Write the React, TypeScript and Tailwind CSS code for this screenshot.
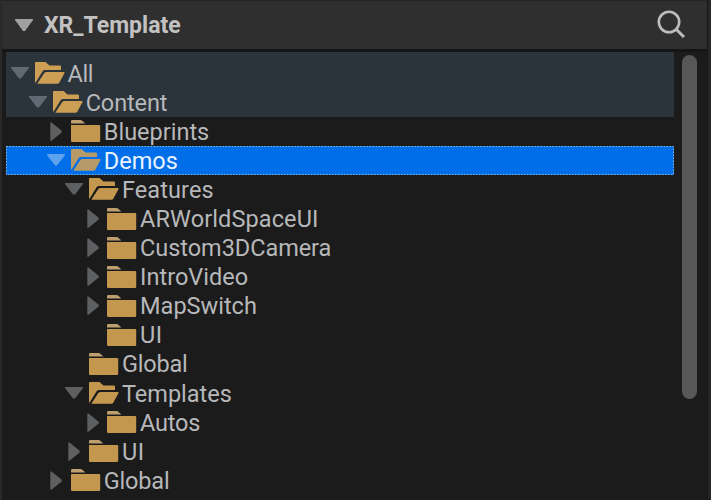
import React from "react";

type State = "open" | "closed" | "leaf";
type Node = { label: string; depth: number; state: State; spacing: string };

const ancestors: Node[] = [
  { label: "All", depth: 0, state: "open", spacing: "tracking-[-0.4px]" },
  { label: "Content", depth: 1, state: "open", spacing: "tracking-[-0.1px]" },
];

const nodes: Node[] = [
  { label: "Blueprints", depth: 2, state: "closed", spacing: "tracking-[0px]" },
  { label: "Demos", depth: 2, state: "open", spacing: "tracking-[0px]" },
  { label: "Features", depth: 3, state: "open", spacing: "tracking-[0.1px]" },
  { label: "ARWorldSpaceUI", depth: 4, state: "closed", spacing: "tracking-[0.1px]" },
  { label: "Custom3DCamera", depth: 4, state: "closed", spacing: "tracking-[-0.05px]" },
  { label: "IntroVideo", depth: 4, state: "closed", spacing: "tracking-[0px]" },
  { label: "MapSwitch", depth: 4, state: "closed", spacing: "tracking-[0px]" },
  { label: "UI", depth: 4, state: "leaf", spacing: "tracking-[0.5px]" },
  { label: "Global", depth: 3, state: "leaf", spacing: "tracking-[-0.2px]" },
  { label: "Templates", depth: 3, state: "open", spacing: "tracking-[0px]" },
  { label: "Autos", depth: 4, state: "closed", spacing: "tracking-[-0.2px]" },
  { label: "UI", depth: 3, state: "closed", spacing: "tracking-[0.5px]" },
  { label: "Global", depth: 2, state: "closed", spacing: "tracking-[-0.2px]" },
];

function Arrow({ state, color }: { state: State; color: string }) {
  return (
    <svg className={`h-[29px] w-[18px] shrink-0 ${color}`} viewBox="0 0 18 29" fill="currentColor">
      {state === "open" && <path d="M0 8h18v1l-8 10.500h-2L0 9z" />}
      {state === "closed" && <path d="M3.300 5.500h1.200l10.200 8.200v1.800L4.500 23.700H3.300z" />}
    </svg>
  );
}

function Folder({ open, color }: { open: boolean; color: string }) {
  return (
    <svg className={`h-[22px] w-[30px] shrink-0 ${color}`} viewBox="0 0 30 22" fill="currentColor">
      {open ? (
        <>
          <path d="M0 1Q0 0 1 0h9.500l4 3.500h10.500q1 0 1 1v3.500H10q-1.500 0-2.400 1.300L1 20Q0 21 0 20z" />
          <path d="M11.300 10H28.800q1.200 0 .6 1.200L24.400 20.500q-.7 1.300-2 1.300H2.300L9.300 11q.8-1 2-1z" />
        </>
      ) : (
        <>
          <path d="M0 3.500V1.200Q0 0 1.200 0H9.500q1 0 1.800.7L14.400 3.500z" fill="#bd9f70" />
          <path d="M0 5H28q1.200 0 1.200 1.200V20.700q0 1.200-1.200 1.200H1.200Q0 21.900 0 20.700z" />
        </>
      )}
    </svg>
  );
}

function Row({ node, tinted = false }: { node: Node; tinted?: boolean }) {
  const selected = node.label === "Demos";
  const arrow = selected ? "text-[#5da2ee]" : tinted ? "text-[#626972]" : "text-[#5e5f61]";
  const folder = selected ? "text-[#b69b69]" : tinted ? "text-[#cd9f55]" : "text-[#c4974f]";
  return (
    <div
      className={`relative flex h-[29.1px] items-center pl-[5px] ${
        selected ? "bg-[#006ee9] text-[#e9f3ff]" : "text-[#b7b8ba]"
      }`}
    >
      {selected && (
        <svg className="absolute inset-0 h-full w-full" fill="none" stroke="#8fb5c5" strokeDasharray="1.5 1.5">
          <rect x="0.5" y="0.5" width="667" height="28" />
        </svg>
      )}
      <div className="flex items-center" style={{ marginLeft: node.depth * 18.15 }}>
        <Arrow state={node.state} color={arrow} />
        <span className="ml-[5.500px] flex">
          <Folder open={node.state === "open"} color={folder} />
        </span>
        <span className={`ml-[3px] pt-[2px] whitespace-nowrap text-[23.500px] leading-[27px] ${node.spacing}`}>{node.label}</span>
      </div>
    </div>
  );
}

export default function App() {
  return (
    <div className="flex h-[500px] w-[711px] overflow-hidden border-l-2 border-[#292929] bg-[#1b1b1b] font-['Roboto',sans-serif]">
      <main className="flex w-[705px] flex-col">
        <header className="flex h-[49px] shrink-0 items-center justify-between border-t border-[#252525] bg-[#2f2f2f] pr-[22px] pb-[1px] pl-[13px]">
          <div className="flex items-center">
            <svg className="h-[12px] w-[18px]" viewBox="0 0 18 12" fill="#a0a0a0">
              <path d="M0 0h18v1l-8 11H8L0 1z" />
            </svg>
            <h1 className="ml-[11px] pt-[2px] text-[23px] leading-[27px] font-bold text-[#c2c2c2]">XR_Template</h1>
          </div>
          <svg className="mb-[2px] h-[28px] w-[28px]" viewBox="0 0 28 28" fill="none" stroke="#bdbdbd" strokeWidth="2.600">
            <circle cx="12" cy="12" r="10.200" />
            <path d="M19.200 19.200L27 27" strokeWidth="3" />
          </svg>
        </header>
        <div className="flex min-h-0 flex-1 border-t-[3px] border-[#151515] pl-1">
          <div className="w-[668px]">
            <div className="bg-[#2b333b] pt-[6.500px]">
              {ancestors.map((n) => (
                <Row key={n.label} node={n} tinted />
              ))}
            </div>
            {nodes.map((n, i) => (
              <Row key={i} node={n} />
            ))}
          </div>
          <div className="mt-[3px] ml-[8px] h-[344px] w-[15px] rounded-full bg-[#575757]" />
        </div>
      </main>
      <div className="flex-1 border-l border-[#171717] bg-[#272727]" />
    </div>
  );
}
